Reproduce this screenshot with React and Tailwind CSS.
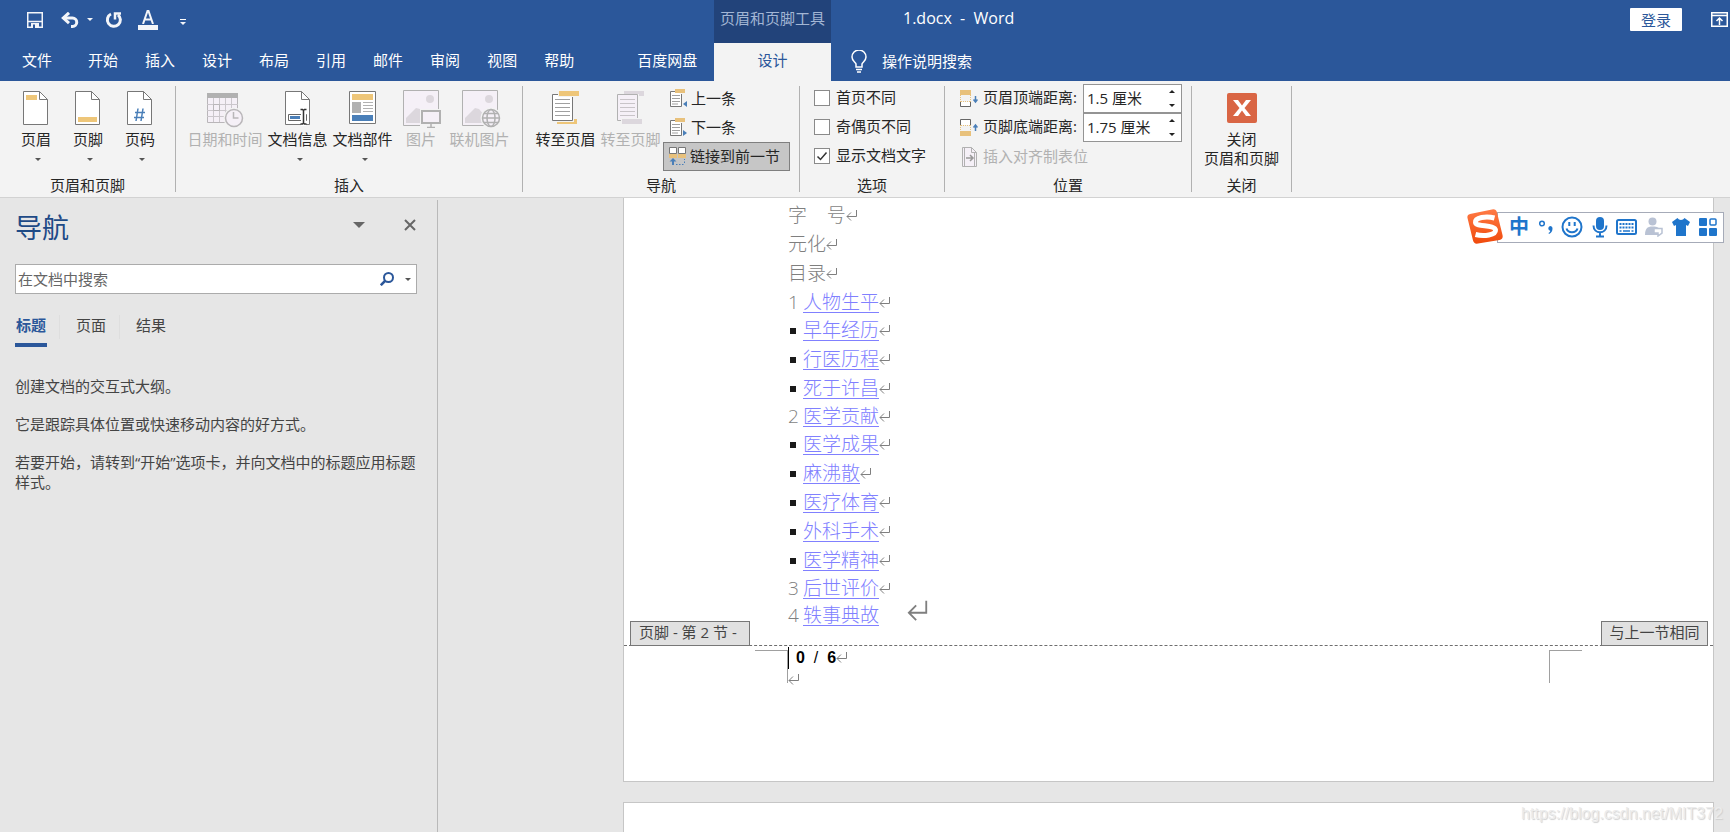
import { useState } from 'react';

const menuTabs = ['开始', '插入', '设计', '布局', '引用', '邮件', '审阅', '视图', '帮助'];

const outline = [
  { mark: '1', title: '人物生平' },
  { mark: '', title: '早年经历' },
  { mark: '', title: '行医历程' },
  { mark: '', title: '死于许昌' },
  { mark: '2', title: '医学贡献' },
  { mark: '', title: '医学成果' },
  { mark: '', title: '麻沸散' },
  { mark: '', title: '医疗体育' },
  { mark: '', title: '外科手术' },
  { mark: '', title: '医学精神' },
  { mark: '3', title: '后世评价' },
  { mark: '4', title: '轶事典故', last: true },
];

const navTabs = ['标题', '页面', '结果'];

/* ---------- shared bits ---------- */

const Caret = ({ className = 'w-[6px] h-[3px] text-[#555]' }) => (
  <svg viewBox="0 0 6 3" className={className} fill="currentColor">
    <path d="M0 0h6L3 3z" />
  </svg>
);

const ReturnMark = ({ className = 'mb-0.5 w-[12px] h-[12px]' }) => (
  <svg viewBox="0 0 12 12" className={`${className} shrink-0`} fill="none" stroke="#7f7f7f" strokeWidth="1">
    <path d="M10.500 1v6.500H1M5 3.500l-4 4 4 4" />
  </svg>
);

const Separator = () => <div className="w-px shrink-0 my-[5px] bg-[#b1b1b1]" />;

const Group = ({ label, className = '', children }) => (
  <section className="flex flex-col shrink-0 pt-[3px]">
    <div className={`flex h-[87px] ${className}`}>{children}</div>
    <h2 className="pt-1 text-center leading-5">{label}</h2>
  </section>
);

const BigButton = ({ icon, label, second, caret, disabled, className = 'w-[65px]' }) => (
  <button
    type="button"
    disabled={disabled}
    className={`flex flex-col items-center shrink-0 pt-[6px] whitespace-nowrap leading-[18px] disabled:text-[#b1b1b1] ${className}`}
  >
    <span className="flex h-10 items-start justify-center">{icon}</span>
    <span>{label}</span>
    {second && <span className="leading-5">{second}</span>}
    {caret && (
      <span className="flex h-[22px] items-center pl-1">
        <Caret />
      </span>
    )}
  </button>
);

/* ---------- ribbon icons ---------- */

const PageIcon = ({ children }) => (
  <svg width="26" height="36" viewBox="0 0 26 36" fill="none">
    <path d="M.5 1.500h16l8 8v25H.5z" fill="#fff" stroke="#777" />
    <path d="M16.500 1.500v8h8" stroke="#777" />
    {children}
  </svg>
);

const DateTimeIcon = () => (
  <svg width="37" height="38" viewBox="0 0 37 38" fill="none" stroke="#b9b6b9">
    <path d="M.5 4.500h30v28H.5z" fill="#f5f0f7" />
    <path d="M0 3h31v5H0z" fill="#b1b1b1" stroke="none" />
    <path d="M6.500 8v24M12.500 8v24M18.500 8v24M24.500 8v24M0 14.500h31M0 20.500h31M0 26.500h31" stroke="#cbc7cc" />
    <path d="M6.500 14.500h6v6h-6z" />
    <circle cx="27" cy="28" r="10.500" fill="#f3f3f3" stroke="none" />
    <circle cx="27" cy="28" r="8.500" fill="#f5f0f7" strokeWidth="1.500" />
    <path d="M26.500 22v6h5" strokeWidth="1.500" />
  </svg>
);

const DocInfoIcon = () => (
  <PageIcon>
    <path d="M3.500 24.500h18v6h-18z" fill="#fff" stroke="#666" />
    <path d="M5 26h10v3H5z" fill="#4a7fb8" />
    <path d="M16 19h5v17h-5z" fill="#fff" />
    <path d="M15.500 19.500h2l1 1 1-1h2M15.500 34h2l1-1 1 1h2M18.500 20v13" stroke="#333" strokeWidth="1.500" />
  </PageIcon>
);

const DocPartsIcon = () => (
  <svg width="28" height="36" viewBox="0 0 28 36" fill="none">
    <path d="M.5 1.500h26v32H.5z" fill="#fff" stroke="#777" />
    <path d="M3 4h21v6H3z" fill="#eec679" />
    <path d="M3 12h9v11H3z" fill="#b1b1b1" />
    <path d="M14 12.500h10M14 15.500h10M14 18.500h10M14 21.500h10" stroke="#b1b1b1" />
    <path d="M3 25h21v6H3z" fill="#4a7fb8" />
  </svg>
);

const PictureBase = ({ children }) => (
  <svg width="42" height="38" viewBox="-3 0 42 38" fill="none" stroke="#b1b1b1">
    <path d="M.5.5h35v35H.5z" fill="#f5f0f7" />
    <circle cx="27" cy="9" r="4" fill="#dcd7dd" stroke="none" />
    <path d="M3 33V28l10-10 4 1 6 7v7z" fill="#dcd7dd" stroke="none" />
    {children}
  </svg>
);

const PictureIcon = () => (
  <PictureBase>
    <path d="M17 19h22v19H17z" fill="#f3f3f3" stroke="none" />
    <path d="M19 21h18v12H19z" fill="#f5f0f7" strokeWidth="2" />
    <path d="M28 34v3M24 37.500h8" strokeWidth="1.500" />
  </PictureBase>
);

const OnlinePictureIcon = () => (
  <PictureBase>
    <circle cx="29" cy="28" r="10.500" fill="#f3f3f3" stroke="none" />
    <g fill="none" strokeWidth="1.500">
      <circle cx="29" cy="28" r="8.500" fill="#f5f0f7" />
      <ellipse cx="29" cy="28" rx="4" ry="8.500" />
      <path d="M20.500 28h17M22 23.500h14M22 32.500h14" />
    </g>
  </PictureBase>
);

const GotoHeaderIcon = () => (
  <svg width="28" height="34" viewBox="0 0 28 34" fill="none">
    <path d="M.5 4.500h20v26H.5z" fill="#fff" stroke="#777" />
    <path d="M3 9.500h15M3 13.500h15M3 17.500h15M3 21.500h15M3 25.500h15" stroke="#a0a0a0" />
    <path d="M6 0h21v7H6z" fill="#f3f3f3" />
    <path d="M7 1h20v5H7z" fill="#eec679" />
    <path d="M5 32h17v-3h3v5H5z" fill="#eec679" />
  </svg>
);

const GotoFooterIcon = () => (
  <svg width="28" height="34" viewBox="0 0 28 34" fill="none">
    <path d="M7 1h20v5h-5V4H7z" fill="#dcd7dd" />
    <path d="M.5 4.500h20v26H.5z" fill="#f5f0f7" stroke="#b1b1b1" />
    <path d="M3 9.500h15M3 13.500h15M3 17.500h15M3 21.500h15M3 25.500h15" stroke="#c8c4c8" />
    <path d="M4 28h22v6H4z" fill="#f3f3f3" />
    <path d="M5 29h20v5H5z" fill="#dcd7dd" />
  </svg>
);

const StepIcon = ({ arrow }) => (
  <svg width="17" height="19" viewBox="0 0 17 19" fill="none" className="shrink-0">
    <path d="M5 2.500H.5v15h11V5" fill="#fff" stroke="#777" />
    <path d="M2 6.500h8M2 9.500h8M2 12.500h8M2 15h6" stroke="#a0a0a0" />
    <path d="M5 0h10v4H5z" fill="#e8c17c" />
    <path d={arrow} fill="#4a7fb8" />
  </svg>
);

const LinkPreviousIcon = () => (
  <svg width="17" height="19" viewBox="0 0 17 19" fill="none" className="shrink-0">
    <path d="M.5.5h7v6h-7zM9.500.5h7v6h-7z" fill="#fff" stroke="#777" />
    <path d="M0 7h8v4H0zM9 7h8v4H9z" fill="#e8c17c" />
    <path d="M4 11l3.500 3.500H5V18H3v-3.500H.5z" fill="#4a7fb8" />
    <path d="M7 17.500h9M15.500 16v-4" stroke="#4a7fb8" strokeDasharray="1.500 1.500" />
  </svg>
);

const HeaderDistanceIcon = () => (
  <svg width="18" height="18" viewBox="0 0 18 18" fill="none" className="shrink-0">
    <path d="M.5 12v4.500h10V12" fill="#fff" stroke="#666" />
    <path d="M.5 5v7M10.500 5v7M1 11.500h10" stroke="#e8c17c" strokeDasharray="1 1" />
    <path d="M0 0h11v5H0z" fill="#e8c17c" />
    <path d="M15.500 6v6M13.500 9.500l2 2.500 2-2.500" stroke="#4a7fb8" strokeWidth="1.500" />
  </svg>
);

const FooterDistanceIcon = () => (
  <svg width="18" height="18" viewBox="0 0 18 18" fill="none" className="shrink-0">
    <path d="M.5 6V.5h10V6" fill="#fff" stroke="#666" />
    <path d="M.5 6v6M10.500 6v6M1 6.500h10" stroke="#e8c17c" strokeDasharray="1 1" />
    <path d="M0 12h11v5H0z" fill="#e8c17c" />
    <path d="M15.500 12V6M13.500 8.500l2-2.500 2 2.500" stroke="#4a7fb8" strokeWidth="1.500" />
  </svg>
);

const AlignTabIcon = () => (
  <svg width="18" height="20" viewBox="0 0 18 20" fill="none" stroke="#b1b1b1" className="shrink-0">
    <path d="M2.500.5h9l5 5v14h-14z" fill="#f5f0f7" />
    <path d="M11.500.5v5h5M4.500 0v20M14.500 6v14" />
    <path d="M6 11h7M10 8l3 3-3 3" stroke="#999" strokeWidth="1.500" />
  </svg>
);

const CloseBigIcon = () => (
  <svg width="30" height="34" viewBox="0 0 30 34">
    <rect y="3" width="30" height="30" rx="2" fill="#d96544" />
    <path d="M6 10h5l4 5.500L19 10h5l-6.500 8L24 26h-5l-4-5.500L11 26H6l6.500-8z" fill="#fff" />
  </svg>
);

/* ---------- header ---------- */

const QuickAccess = () => (
  <div className="flex w-[714px] shrink-0 items-center pb-1 pl-[27px] text-[#f3f5f9]">
    <button type="button" aria-label="保存">
      <svg width="16" height="16" viewBox="0 0 16 16" fill="none" stroke="currentColor" strokeWidth="1.500">
        <path d="M.75.75h14.500v14.500H.75z" />
        <path d="M1 9.500h14" />
        <path d="M4 11h8v5H4z" fill="currentColor" stroke="none" />
        <path d="M6 12.500h2V16H6z" fill="#2b579a" stroke="none" />
      </svg>
    </button>
    <button type="button" aria-label="撤消" className="ml-[18px] flex items-center gap-2">
      <svg width="18" height="16" viewBox="0 0 18 16" fill="none" stroke="currentColor" strokeWidth="3">
        <path d="M2 6h9.500a4 4 0 010 8.500H10" />
        <path d="M8 .8L2.300 6 8 11.200" />
      </svg>
      <Caret className="h-[3px] w-[6px]" />
    </button>
    <button type="button" aria-label="重复" className="ml-3">
      <svg width="18" height="18" viewBox="0 0 18 18" fill="none" stroke="currentColor" strokeWidth="3">
        <path d="M6 3a6.500 6.500 0 107 .8" />
        <path d="M10 8.500V2.500h6" strokeWidth="2.500" />
      </svg>
    </button>
    <button type="button" aria-label="字体颜色" className="ml-[15px] flex w-[20px] flex-col items-center">
      <svg width="14" height="14" viewBox="0 0 14 14" fill="none" stroke="currentColor" strokeWidth="2">
        <path d="M2 14L6.500 1h1L12 14M3.500 9.500h7" />
      </svg>
      <span className="mt-px h-[5px] w-full bg-[#f3f5f9]" />
    </button>
    <button type="button" aria-label="自定义快速访问工具栏" className="ml-[22px] flex flex-col items-center gap-0.5 pt-1">
      <span className="h-px w-[6px] bg-white" />
      <Caret className="h-[3px] w-[6px]" />
    </button>
  </div>
);

const Header = () => (
  <header className="shrink-0 bg-[#2b579a] text-white">
    <div className="flex h-[43px]">
      <QuickAccess />
      <div className="w-[117px] shrink-0 bg-[#22437a] pt-2 text-center leading-5 text-[#a3b6d4]">页眉和页脚工具</div>
      <h1 className="shrink-0 whitespace-pre pl-[72px] pt-2 text-[16px] leading-5">{'1.docx  -  Word'}</h1>
      <div className="ml-auto flex shrink-0 items-start gap-[29px] pr-0.5 pt-2">
        <button type="button" className="h-[23px] w-[52px] rounded-[1px] bg-white leading-[20px] text-[#2b579a]">
          登录
        </button>
        <button type="button" aria-label="功能区显示选项" className="pt-1">
          <svg width="17" height="15" viewBox="0 0 17 15" fill="none" stroke="currentColor">
            <path d="M.75.75h15.500v13.500H.75zM1 3.500h15" strokeWidth="1.500" />
            <path d="M8.500 13V6M5.500 9l3-3 3 3" strokeWidth="1.500" />
          </svg>
        </button>
      </div>
    </div>
    <div className="flex h-[38px]">
      <nav className="flex w-[714px] shrink-0 items-center pl-[22px] pb-1">
        <button type="button" className="mr-9">文件</button>
        <div className="flex gap-[27px]">
          {menuTabs.map((tab) => (
            <button type="button" key={tab}>{tab}</button>
          ))}
        </div>
        <button type="button" className="ml-[63px]">百度网盘</button>
      </nav>
      <button type="button" className="w-[117px] shrink-0 bg-[#f3f3f3] pb-1 text-[#2b579a]">设计</button>
      <button type="button" className="ml-5 flex shrink-0 items-center gap-[15px] pb-0.5">
        <svg width="16" height="23" viewBox="0 0 16 23" fill="none" stroke="currentColor" strokeWidth="1.500">
          <path d="M5 17v-3C4.500 12 1 11 1 7a7 7 0 0114 0c0 4-3.500 5-4 7v3zM5 19.500h6M6 22h4" />
        </svg>
        操作说明搜索
      </button>
    </div>
  </header>
);

/* ---------- ribbon ---------- */

const CheckRow = ({ label, defaultChecked }) => (
  <label className="flex h-[29px] items-center gap-[6px] pb-0.5">
    <span className="grid h-4 w-4">
      <input
        type="checkbox"
        defaultChecked={defaultChecked}
        className="peer col-start-1 row-start-1 h-4 w-4 appearance-none border border-[#8a8a8a] bg-white"
      />
      <svg viewBox="0 0 16 16" fill="none" stroke="#333" strokeWidth="1.500" className="pointer-events-none invisible col-start-1 row-start-1 h-4 w-4 peer-checked:visible">
        <path d="M3.500 8.500l3 3 6-7" />
      </svg>
    </span>
    {label}
  </label>
);

const DistanceRow = ({ id, icon, label, defaultValue }) => (
  <div className="flex h-[29px] items-center">
    {icon}
    <label htmlFor={id} className="w-[100px] shrink-0 pb-0.5 pl-[5px]">{label}</label>
    <div className="ml-[5px] flex h-full w-[99px] border border-[#949494] bg-white">
      <input id={id} type="text" defaultValue={defaultValue} className="w-[78px] bg-transparent pl-[3px] text-[15px] outline-none" />
      <div className="flex flex-1 flex-col items-center justify-between py-[5px]">
        <button type="button" aria-label="增加" className="rotate-180">
          <Caret className="h-[3px] w-[6px] text-[#222]" />
        </button>
        <button type="button" aria-label="减少">
          <Caret className="h-[3px] w-[6px] text-[#222]" />
        </button>
      </div>
    </div>
  </div>
);

const Ribbon = () => (
  <div className="flex h-[117px] shrink-0 overflow-hidden border-b border-[#d2d2d2] bg-[#f3f3f3] text-[#262626]">
    <Group label="页眉和页脚" className="pl-[10px] pr-[9px]">
      <BigButton className="w-[52px]" label="页眉" caret icon={<PageIcon><path d="M3 5h11v5H3z" fill="#eec679" /></PageIcon>} />
      <BigButton className="w-[52px]" label="页脚" caret icon={<PageIcon><path d="M3 27h19v5H3z" fill="#eec679" /></PageIcon>} />
      <BigButton
        className="w-[52px]"
        label="页码"
        caret
        icon={
          <PageIcon>
            <path d="M11 18.500L9 31M16 18.500L14 31M8 22.500h10M7 27.500h10" stroke="#4a7fb8" strokeWidth="1.500" />
          </PageIcon>
        }
      />
    </Group>
    <Separator />
    <Group label="插入" className="pl-[9px] pr-[10px]">
      <BigButton className="w-[80px]" label="日期和时间" disabled icon={<DateTimeIcon />} />
      <BigButton label="文档信息" caret icon={<DocInfoIcon />} />
      <BigButton label="文档部件" caret icon={<DocPartsIcon />} />
      <BigButton className="w-[52px]" label="图片" disabled icon={<PictureIcon />} />
      <BigButton label="联机图片" disabled icon={<OnlinePictureIcon />} />
    </Group>
    <Separator />
    <Group label="导航" className="pl-[10px] pr-[9px]">
      <BigButton label="转至页眉" icon={<GotoHeaderIcon />} />
      <BigButton label="转至页脚" disabled icon={<GotoFooterIcon />} />
      <div className="flex w-[127px] flex-col">
        <button type="button" className="flex h-[29px] items-center gap-1 pl-[7px]">
          <StepIcon arrow="M17 12v6l-4-3z" />
          上一条
        </button>
        <button type="button" className="flex h-[29px] items-center gap-1 pl-[7px]">
          <StepIcon arrow="M13 12v6l4-3z" />
          下一条
        </button>
        <button type="button" aria-pressed="true" className="flex h-[29px] items-center gap-1 border border-[#7f7f7f] bg-[#c6c6c6] pl-[5px]">
          <LinkPreviousIcon />
          链接到前一节
        </button>
      </div>
    </Group>
    <Separator />
    <Group label="选项" className="pl-[14px] pr-[18px]">
      <div className="flex flex-col">
        <CheckRow label="首页不同" />
        <CheckRow label="奇偶页不同" />
        <CheckRow label="显示文档文字" defaultChecked />
      </div>
    </Group>
    <Separator />
    <Group label="位置" className="pl-[15px] pr-[9px]">
      <div className="flex flex-col">
        <DistanceRow id="header-distance" icon={<HeaderDistanceIcon />} label="页眉顶端距离:" defaultValue="1.5 厘米" />
        <DistanceRow id="footer-distance" icon={<FooterDistanceIcon />} label="页脚底端距离:" defaultValue="1.75 厘米" />
        <button type="button" disabled className="flex h-[29px] items-center gap-[5px] text-[#b1b1b1]">
          <AlignTabIcon />
          插入对齐制表位
        </button>
      </div>
    </Group>
    <Separator />
    <Group label="关闭" className="px-3">
      <BigButton className="w-[75px]" label="关闭" second="页眉和页脚" icon={<CloseBigIcon />} />
    </Group>
    <Separator />
  </div>
);

/* ---------- navigation pane ---------- */

const NavigationPane = () => {
  const [active, setActive] = useState('标题');

  return (
    <aside className="mt-0.5 w-[438px] shrink-0 border-r border-[#b9b9b9] pl-[15px] text-[#444]">
      <div className="flex items-start pr-[21px] pt-[10px]">
        <h2 className="text-[27px] leading-9 text-[#1e4a86]">导航</h2>
        <button type="button" aria-label="任务窗格选项" className="ml-auto mt-3">
          <Caret className="h-[6px] w-[12px] text-[#666]" />
        </button>
        <button type="button" aria-label="关闭" className="ml-[39px] mt-[9px]">
          <svg width="12" height="12" viewBox="0 0 12 12" stroke="#666" strokeWidth="2">
            <path d="M1 1l10 10M11 1L1 11" />
          </svg>
        </button>
      </div>
      <div className="mr-5 mt-[18px] flex h-[30px] items-center border border-[#ababab] bg-white pr-[5px]">
        <input
          type="text"
          aria-label="在文档中搜索"
          placeholder="在文档中搜索"
          className="min-w-0 flex-1 bg-transparent pl-0.5 outline-none placeholder:text-[#666]"
        />
        <button type="button" aria-label="搜索">
          <svg width="14" height="14" viewBox="0 0 14 14" fill="none" stroke="#2b579a" strokeWidth="2">
            <circle cx="8.500" cy="5.500" r="4.500" />
            <path d="M5.500 8.500L.8 13.200" strokeWidth="2.500" />
          </svg>
        </button>
        <button type="button" aria-label="搜索选项" className="ml-[11px]">
          <Caret />
        </button>
      </div>
      <div className="mt-[21px] flex" role="tablist">
        {navTabs.map((tab, i) => (
          <div key={tab} className="flex items-start">
            {i > 0 && <span className="ml-3 mr-[15px] h-6 w-px bg-[#dedede]" />}
            <button
              type="button"
              role="tab"
              aria-selected={active === tab}
              onClick={() => setActive(tab)}
              className={`w-8 border-b-4 pb-2 leading-5 ${
                active === tab ? 'border-[#2b579a] font-bold text-[#2b579a]' : 'border-transparent'
              }`}
            >
              {tab}
            </button>
          </div>
        ))}
      </div>
      <div className="mt-[29px] flex flex-col gap-[18px] pr-3 leading-5">
        <p>创建文档的交互式大纲。</p>
        <p>它是跟踪具体位置或快速移动内容的好方式。</p>
        <p>若要开始，请转到“开始”选项卡，并向文档中的标题应用标题样式。</p>
      </div>
    </aside>
  );
};

/* ---------- document ---------- */

const DocumentPage = () => (
  <article className="shrink-0 border-x border-b border-[#c6c6c6] bg-white">
    <div className="pl-[164px] pt-[3px] text-[19px] font-light text-[#7f7f7f]">
      {['字    号', '元化', '目录'].map((line) => (
        <p key={line} className="flex h-[29px] items-center whitespace-pre">
          {line}
          <ReturnMark />
        </p>
      ))}
      <ul className="pt-px">
        {outline.map(({ mark, title, last }) => (
          <li key={title} className={`flex items-center ${mark ? 'h-[27px]' : 'h-[29px]'}`}>
            <span className="w-[15px] shrink-0">
              {mark || <span className="ml-0.5 block h-[6px] w-[6px] bg-[#1a1a1a]" />}
            </span>
            <a href="#" className="border-b border-[#8080ff] leading-[19px] text-[#8080ff]">{title}</a>
            {last ? <ReturnMark className="ml-7 mb-3 h-[22px] w-[22px]" /> : <ReturnMark />}
          </li>
        ))}
      </ul>
    </div>

    <footer className="relative mt-4 flex border-t border-dashed border-[#6e6e6e] pb-[90px] pt-px">
      <span className="absolute bottom-full left-[6px] h-[25px] w-[120px] border border-[#777] bg-[#e1e1e1] pl-2 leading-[21px] text-[#444]">
        页脚 - 第 2 节 -
      </span>
      <span className="absolute bottom-full right-[5px] h-[25px] w-[107px] border border-[#777] bg-[#e1e1e1] text-center leading-[21px] text-[#444]">
        与上一节相同
      </span>
      <span className="ml-[131px] mt-[3px] h-[33px] w-[33px] border-r border-t border-[#a0a0a0]" />
      <div className="text-black">
        <p className="flex h-[22px] items-center whitespace-pre border-l border-black pl-[7px] font-['Liberation_Sans',sans-serif] text-[16px] leading-[22px]">
          <b>0</b>{'  /  '}<b>6</b>
          <ReturnMark />
        </p>
        <p className="flex h-[22px] items-center">
          <ReturnMark />
        </p>
      </div>
      <span className="ml-auto mr-[131px] mt-[3px] h-[33px] w-[33px] border-l border-t border-[#a0a0a0]" />
    </footer>
  </article>
);

/* ---------- floating input method bar ---------- */

const ImeBar = () => (
  <div className="absolute right-[6px] top-[209px] flex items-center text-[#1f75cb]">
    <svg width="38" height="36" viewBox="0 0 38 36" className="relative z-10 -mr-[7px]">
      <defs>
        <linearGradient id="ime-logo" x1="0" y1="0" x2="0" y2="1">
          <stop offset="0" stopColor="#ff7a45" />
          <stop offset="1" stopColor="#f04a0c" />
        </linearGradient>
      </defs>
      <path d="M4 5L26 .5q4-.8 5 3L36.500 26q1 4-3 5L12 34.500q-4 .8-5-3L1.500 9Q.7 5.700 4 5z" fill="url(#ime-logo)" />
      <path
        d="M28.500 9C20 6.800 9 8.500 9.500 13.500c.4 4.500 19.500 2 20 7.500.4 5-11.500 6.800-20 4.500"
        fill="none"
        stroke="#fff"
        strokeWidth="5"
      />
    </svg>
    <div className="flex h-[31px] w-[227px] items-center border border-[#a6abb8] bg-white pl-[11px]">
      <button type="button" className="w-5 text-[20px] font-bold leading-5">中</button>
      <button type="button" aria-label="标点" className="ml-[9px]">
        <svg width="16" height="16" viewBox="0 0 16 16" fill="currentColor">
          <circle cx="4" cy="4.500" r="2.300" fill="none" stroke="currentColor" strokeWidth="1.500" />
          <path d="M12 7a2.500 2.500 0 012.500 2.500c0 2.500-1 4.500-3.500 5.500l-.5-1c1.200-.6 1.700-1.300 1.700-2.200A2.500 2.500 0 0112 7z" />
        </svg>
      </button>
      <button type="button" aria-label="表情" className="ml-[7px]">
        <svg width="22" height="22" viewBox="0 0 22 22" fill="none" stroke="currentColor" strokeWidth="2">
          <circle cx="11" cy="11" r="9.500" />
          <path d="M8.300 6v4M13.700 6v4M5.500 12.500c1.500 5 9.500 5 11 0" />
        </svg>
      </button>
      <button type="button" aria-label="语音" className="ml-[9px]">
        <svg width="16" height="22" viewBox="0 0 16 22" fill="none" stroke="currentColor" strokeWidth="2">
          <rect x="4" y="1" width="8" height="13" rx="4" fill="currentColor" stroke="none" />
          <path d="M1.500 9.500c0 9 13 9 13 0M8 16v4M4 20.500h8" />
        </svg>
      </button>
      <button type="button" aria-label="键盘" className="ml-[8px]">
        <svg width="21" height="16" viewBox="0 0 21 16" fill="none" stroke="currentColor">
          <rect x="1" y="1" width="19" height="14" rx="1.500" strokeWidth="2" />
          <path d="M3.500 5h14M3.500 8.500h14" strokeWidth="2" strokeDasharray="2 1" />
          <path d="M3.500 12h2M7 12h7M15.500 12h2" strokeWidth="1.500" />
        </svg>
      </button>
      <button type="button" aria-label="账户" className="ml-[8px] text-[#b9c2d4]">
        <svg width="18" height="20" viewBox="0 0 18 20" fill="currentColor">
          <circle cx="7.500" cy="4.500" r="4" />
          <path d="M0 18c0-6 2-8.500 7.500-8.500S14 11 14 12v6z" />
          <path d="M9 11.500h8v4.500l-4 3v-3H9z" fill="#fff" stroke="currentColor" strokeWidth="1.500" />
        </svg>
      </button>
      <button type="button" aria-label="皮肤" className="ml-[9px]">
        <svg width="18" height="18" viewBox="0 0 18 18" fill="currentColor">
          <path d="M5.500 0c1.500 2.500 5.500 2.500 7 0L18 4l-2 4-2-1v11H4V7L2 8 0 4z" />
        </svg>
      </button>
      <button type="button" aria-label="工具箱" className="ml-[9px]">
        <svg width="18" height="18" viewBox="0 0 18 18" fill="currentColor">
          <rect x="0" y="0" width="8" height="8" rx="1" />
          <rect x="0" y="10" width="8" height="8" rx="1" />
          <rect x="10" y="10" width="8" height="8" rx="1" />
          <rect x="11" y="1" width="6" height="6" rx="1" fill="none" stroke="currentColor" strokeWidth="1.500" />
        </svg>
      </button>
    </div>
  </div>
);

const App = () => (
  <div className="relative flex h-screen flex-col overflow-hidden bg-[#e6e6e6] font-['Open_Sans','Noto_Sans_CJK_SC',sans-serif] text-[15px]">
    <Header />
    <Ribbon />
    <div className="flex min-h-0 flex-1">
      <NavigationPane />
      <main className="flex min-w-0 flex-1 flex-col gap-5 pl-[185px] pr-4">
        <DocumentPage />
        <article className="flex-1 border-x border-t border-[#c6c6c6] bg-white" />
      </main>
    </div>
    <ImeBar />
    <span className="absolute bottom-1.5 right-[7px] font-['Liberation_Sans',sans-serif] text-[16px] leading-6 text-[#ececec] [text-shadow:1px_1px_1px_#cfcfcf]">
      https://blog.csdn.net/MIT372
    </span>
  </div>
);

export default App;
